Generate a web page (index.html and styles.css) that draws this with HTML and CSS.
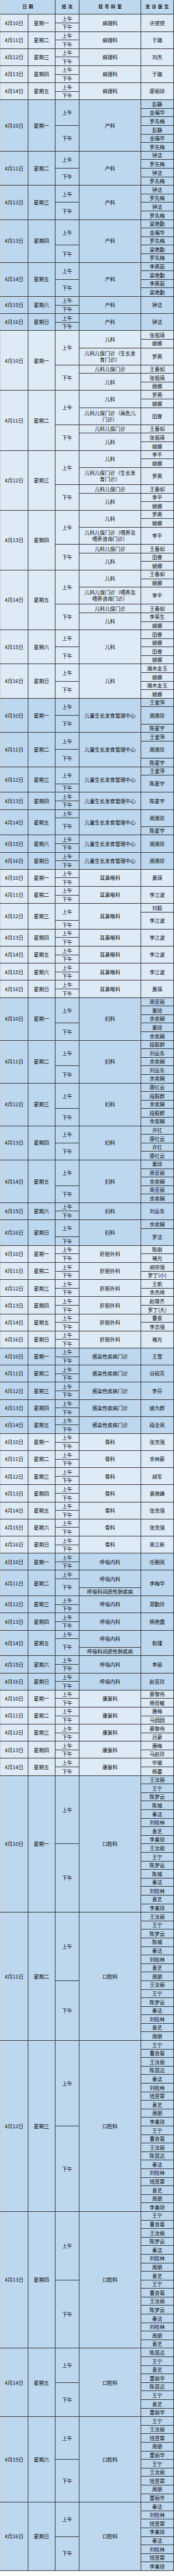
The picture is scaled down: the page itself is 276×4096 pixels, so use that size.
FILE: index.html
```html
<!DOCTYPE html>
<html lang="zh-CN">
<head>
<meta charset="utf-8">
<title>门诊排班表</title>
<link rel="stylesheet" href="styles.css">
</head>
<body>
<table class="sched">
<colgroup><col class="c-date"><col class="c-wk"><col class="c-shift"><col class="c-dept"><col class="c-doc"></colgroup>
<thead>
<tr><th colspan="2">日期</th><th>班次</th><th>挂号科室</th><th>坐诊医生</th></tr>
</thead>

<tbody class="lt">
<tr><td rowspan="2">4月10日</td><td rowspan="2">星期一</td><td>上午</td><td rowspan="2">病理科</td><td rowspan="2">许赟赟</td></tr>
<tr><td>下午</td></tr>
<tr><td rowspan="2">4月11日</td><td rowspan="2">星期二</td><td>上午</td><td rowspan="2">病理科</td><td rowspan="2">于璐</td></tr>
<tr><td>下午</td></tr>
<tr><td rowspan="2">4月12日</td><td rowspan="2">星期三</td><td>上午</td><td rowspan="2">病理科</td><td rowspan="2">刘杰</td></tr>
<tr><td>下午</td></tr>
<tr><td rowspan="2">4月13日</td><td rowspan="2">星期四</td><td>上午</td><td rowspan="2">病理科</td><td rowspan="2">于璐</td></tr>
<tr><td>下午</td></tr>
<tr><td rowspan="2">4月14日</td><td rowspan="2">星期五</td><td>上午</td><td rowspan="2">病理科</td><td rowspan="2">廖丽琼</td></tr>
<tr><td>下午</td></tr>
</tbody>

<tbody class="dk">
<tr><td rowspan="6">4月10日</td><td rowspan="6">星期一</td><td rowspan="3">上午</td><td rowspan="6">产科</td><td>彭静</td></tr>
<tr><td>金福华</td></tr>
<tr><td>罗先梅</td></tr>
<tr><td rowspan="3">下午</td><td>彭静</td></tr>
<tr><td>金福华</td></tr>
<tr><td>罗先梅</td></tr>
<tr><td rowspan="4">4月11日</td><td rowspan="4">星期二</td><td rowspan="2">上午</td><td rowspan="4">产科</td><td>钟洁</td></tr>
<tr><td>罗先梅</td></tr>
<tr><td rowspan="2">下午</td><td>钟洁</td></tr>
<tr><td>罗先梅</td></tr>
<tr><td rowspan="4">4月12日</td><td rowspan="4">星期三</td><td rowspan="2">上午</td><td rowspan="4">产科</td><td>钟洁</td></tr>
<tr><td>罗先梅</td></tr>
<tr><td rowspan="2">下午</td><td>钟洁</td></tr>
<tr><td>罗先梅</td></tr>
<tr><td rowspan="5">4月13日</td><td rowspan="5">星期四</td><td rowspan="3">上午</td><td rowspan="5">产科</td><td>梁艳勤</td></tr>
<tr><td>金福华</td></tr>
<tr><td>罗先梅</td></tr>
<tr><td rowspan="2">下午</td><td>梁艳勤</td></tr>
<tr><td>罗先梅</td></tr>
<tr><td rowspan="4">4月14日</td><td rowspan="4">星期五</td><td rowspan="2">上午</td><td rowspan="4">产科</td><td>李燕茹</td></tr>
<tr><td>梁艳勤</td></tr>
<tr><td rowspan="2">下午</td><td>李燕茹</td></tr>
<tr><td>梁艳勤</td></tr>
<tr><td rowspan="2">4月15日</td><td rowspan="2">星期六</td><td>上午</td><td rowspan="2">产科</td><td rowspan="2">钟洁</td></tr>
<tr><td>下午</td></tr>
<tr><td rowspan="2">4月16日</td><td rowspan="2">星期日</td><td>上午</td><td rowspan="2">产科</td><td rowspan="2">钟洁</td></tr>
<tr><td>下午</td></tr>
</tbody>

<tbody class="lt">
<tr><td rowspan="7">4月10日</td><td rowspan="7">星期一</td><td rowspan="4">上午</td><td rowspan="2">儿科</td><td>张祖瑛</td></tr>
<tr><td>姚娜</td></tr>
<tr><td rowspan="2" class="wrap">儿科儿保门诊（生长发育门诊）</td><td rowspan="2">罗燕</td></tr>
<tr></tr>
<tr><td rowspan="3">下午</td><td>儿科儿保门诊</td><td>王春如</td></tr>
<tr><td rowspan="2">儿科</td><td>张祖瑛</td></tr>
<tr><td>姚娜</td></tr>
<tr><td rowspan="7">4月11日</td><td rowspan="7">星期二</td><td rowspan="4">上午</td><td rowspan="2">儿科</td><td>罗燕</td></tr>
<tr><td>姚娜</td></tr>
<tr><td rowspan="2" class="wrap">儿科儿保门诊（高危儿门诊）</td><td rowspan="2">田睿</td></tr>
<tr></tr>
<tr><td rowspan="3">下午</td><td>儿科儿保门诊</td><td>王春如</td></tr>
<tr><td rowspan="2">儿科</td><td>张祖瑛</td></tr>
<tr><td>姚娜</td></tr>
<tr><td rowspan="7">4月12日</td><td rowspan="7">星期三</td><td rowspan="4">上午</td><td rowspan="2">儿科</td><td>李平</td></tr>
<tr><td>姚娜</td></tr>
<tr><td rowspan="2" class="wrap">儿科儿保门诊（生长发育门诊）</td><td rowspan="2">罗燕</td></tr>
<tr></tr>
<tr><td rowspan="3">下午</td><td>儿科儿保门诊</td><td>王春如</td></tr>
<tr><td rowspan="2">儿科</td><td>李平</td></tr>
<tr><td>姚娜</td></tr>
<tr><td rowspan="7">4月13日</td><td rowspan="7">星期四</td><td rowspan="4">上午</td><td rowspan="2">儿科</td><td>罗燕</td></tr>
<tr><td>姚娜</td></tr>
<tr><td rowspan="2" class="wrap">儿科儿保门诊（喂养及喂养咨询门诊）</td><td rowspan="2">李平</td></tr>
<tr></tr>
<tr><td rowspan="3">下午</td><td>儿科儿保门诊</td><td>王春如</td></tr>
<tr><td rowspan="2">儿科</td><td>田睿</td></tr>
<tr><td>姚娜</td></tr>
<tr><td rowspan="7">4月14日</td><td rowspan="7">星期五</td><td rowspan="4">上午</td><td rowspan="2">儿科</td><td>王春如</td></tr>
<tr><td>姚娜</td></tr>
<tr><td rowspan="2" class="wrap">儿科儿保门诊（喂养及喂养咨询门诊）</td><td rowspan="2">李平</td></tr>
<tr></tr>
<tr><td rowspan="3">下午</td><td>儿科儿保门诊</td><td>王春如</td></tr>
<tr><td rowspan="2">儿科</td><td>李荣生</td></tr>
<tr><td>姚娜</td></tr>
<tr><td rowspan="4">4月15日</td><td rowspan="4">星期六</td><td rowspan="2">上午</td><td rowspan="4">儿科</td><td>田睿</td></tr>
<tr><td>姚娜</td></tr>
<tr><td rowspan="2">下午</td><td>田睿</td></tr>
<tr><td>姚娜</td></tr>
<tr><td rowspan="4">4月16日</td><td rowspan="4">星期日</td><td rowspan="2">上午</td><td rowspan="4">儿科</td><td>端木金玉</td></tr>
<tr><td>姚娜</td></tr>
<tr><td rowspan="2">下午</td><td>端木金玉</td></tr>
<tr><td>姚娜</td></tr>
</tbody>

<tbody class="dk">
<tr><td rowspan="4">4月10日</td><td rowspan="4">星期一</td><td rowspan="2">上午</td><td rowspan="4">儿童生长发育管理中心</td><td>王爱萍</td></tr>
<tr><td rowspan="2">周焕珍</td></tr>
<tr><td rowspan="2">下午</td></tr>
<tr><td>陈星宇</td></tr>
<tr><td rowspan="4">4月11日</td><td rowspan="4">星期二</td><td rowspan="2">上午</td><td rowspan="4">儿童生长发育管理中心</td><td>王爱萍</td></tr>
<tr><td rowspan="2">周焕珍</td></tr>
<tr><td rowspan="2">下午</td></tr>
<tr><td>陈星宇</td></tr>
<tr><td rowspan="3">4月12日</td><td rowspan="3">星期三</td><td rowspan="2">上午</td><td rowspan="3">儿童生长发育管理中心</td><td>王爱萍</td></tr>
<tr><td rowspan="2">陈星宇</td></tr>
<tr><td>下午</td></tr>
<tr><td rowspan="2">4月13日</td><td rowspan="2">星期四</td><td>上午</td><td rowspan="2">儿童生长发育管理中心</td><td rowspan="2">陈星宇</td></tr>
<tr><td>下午</td></tr>
<tr><td rowspan="3">4月14日</td><td rowspan="3">星期五</td><td>上午</td><td rowspan="3">儿童生长发育管理中心</td><td rowspan="2">周焕珍</td></tr>
<tr><td rowspan="2">下午</td></tr>
<tr><td>陈星宇</td></tr>
<tr><td rowspan="2">4月15日</td><td rowspan="2">星期六</td><td>上午</td><td rowspan="2">儿童生长发育管理中心</td><td rowspan="2">周焕珍</td></tr>
<tr><td>下午</td></tr>
<tr><td rowspan="2">4月16日</td><td rowspan="2">星期日</td><td>上午</td><td rowspan="2">儿童生长发育管理中心</td><td rowspan="2">周焕珍</td></tr>
<tr><td>下午</td></tr>
</tbody>

<tbody class="lt">
<tr><td rowspan="2">4月10日</td><td rowspan="2">星期一</td><td>上午</td><td rowspan="2">耳鼻喉科</td><td rowspan="2">黄瑛</td></tr>
<tr><td>下午</td></tr>
<tr><td rowspan="2">4月11日</td><td rowspan="2">星期二</td><td>上午</td><td rowspan="2">耳鼻喉科</td><td rowspan="2">李江波</td></tr>
<tr><td>下午</td></tr>
<tr><td rowspan="3">4月12日</td><td rowspan="3">星期三</td><td rowspan="2">上午</td><td rowspan="3">耳鼻喉科</td><td>刘毅</td></tr>
<tr><td rowspan="2">李江波</td></tr>
<tr><td>下午</td></tr>
<tr><td rowspan="2">4月13日</td><td rowspan="2">星期四</td><td>上午</td><td rowspan="2">耳鼻喉科</td><td rowspan="2">李江波</td></tr>
<tr><td>下午</td></tr>
<tr><td rowspan="2">4月14日</td><td rowspan="2">星期五</td><td>上午</td><td rowspan="2">耳鼻喉科</td><td rowspan="2">李江波</td></tr>
<tr><td>下午</td></tr>
<tr><td rowspan="2">4月15日</td><td rowspan="2">星期六</td><td>上午</td><td rowspan="2">耳鼻喉科</td><td rowspan="2">李江波</td></tr>
<tr><td>下午</td></tr>
<tr><td rowspan="2">4月16日</td><td rowspan="2">星期日</td><td>上午</td><td rowspan="2">耳鼻喉科</td><td rowspan="2">黄瑛</td></tr>
<tr><td>下午</td></tr>
</tbody>

<tbody class="dk">
<tr><td rowspan="5">4月10日</td><td rowspan="5">星期一</td><td rowspan="3">上午</td><td rowspan="5">妇科</td><td>周亚丽</td></tr>
<tr><td>栗琼</td></tr>
<tr><td>余奕娴</td></tr>
<tr><td rowspan="2">下午</td><td>栗琼</td></tr>
<tr><td>余奕娴</td></tr>
<tr><td rowspan="5">4月11日</td><td rowspan="5">星期二</td><td rowspan="3">上午</td><td rowspan="5">妇科</td><td>段毅群</td></tr>
<tr><td>刘云东</td></tr>
<tr><td>余奕娴</td></tr>
<tr><td rowspan="2">下午</td><td>刘云东</td></tr>
<tr><td>余奕娴</td></tr>
<tr><td rowspan="5">4月12日</td><td rowspan="5">星期三</td><td rowspan="3">上午</td><td rowspan="5">妇科</td><td>廖红云</td></tr>
<tr><td>段毅群</td></tr>
<tr><td>余奕娴</td></tr>
<tr><td rowspan="2">下午</td><td>段毅群</td></tr>
<tr><td>余奕娴</td></tr>
<tr><td rowspan="4">4月13日</td><td rowspan="4">星期四</td><td rowspan="2">上午</td><td rowspan="4">妇科</td><td>许红</td></tr>
<tr><td>廖红云</td></tr>
<tr><td rowspan="2">下午</td><td>许红</td></tr>
<tr><td>廖红云</td></tr>
<tr><td rowspan="5">4月14日</td><td rowspan="5">星期五</td><td rowspan="3">上午</td><td rowspan="5">妇科</td><td>栗琼</td></tr>
<tr><td>周亚丽</td></tr>
<tr><td>余奕娴</td></tr>
<tr><td rowspan="2">下午</td><td>周亚丽</td></tr>
<tr><td>余奕娴</td></tr>
<tr><td rowspan="2">4月15日</td><td rowspan="2">星期六</td><td>上午</td><td rowspan="2">妇科</td><td rowspan="2">刘云东</td></tr>
<tr><td>下午</td></tr>
<tr><td rowspan="3">4月16日</td><td rowspan="3">星期日</td><td rowspan="2">上午</td><td rowspan="3">妇科</td><td>余奕娴</td></tr>
<tr><td rowspan="2">罗洁</td></tr>
<tr><td>下午</td></tr>
</tbody>

<tbody class="lt">
<tr><td rowspan="2">4月10日</td><td rowspan="2">星期一</td><td>上午</td><td rowspan="2">肝胆外科</td><td>陈刚</td></tr>
<tr><td>下午</td><td>褚光</td></tr>
<tr><td rowspan="2">4月11日</td><td rowspan="2">星期二</td><td>上午</td><td rowspan="2">肝胆外科</td><td>胡宗强</td></tr>
<tr><td>下午</td><td>罗丁(小)</td></tr>
<tr><td rowspan="2">4月12日</td><td rowspan="2">星期三</td><td>上午</td><td rowspan="2">肝胆外科</td><td>王帆</td></tr>
<tr><td>下午</td><td>余杰琦</td></tr>
<tr><td rowspan="2">4月13日</td><td rowspan="2">星期四</td><td>上午</td><td rowspan="2">肝胆外科</td><td>赵雄齐</td></tr>
<tr><td>下午</td><td>罗丁(大)</td></tr>
<tr><td rowspan="2">4月14日</td><td rowspan="2">星期五</td><td>上午</td><td rowspan="2">肝胆外科</td><td>曹俊</td></tr>
<tr><td>下午</td><td>李志强</td></tr>
<tr><td rowspan="2">4月16日</td><td rowspan="2">星期日</td><td>上午</td><td rowspan="2">肝胆外科</td><td rowspan="2">褚光</td></tr>
<tr><td>下午</td></tr>
</tbody>

<tbody class="dk">
<tr><td rowspan="2">4月10日</td><td rowspan="2">星期一</td><td>上午</td><td rowspan="2">感染性疾病门诊</td><td rowspan="2">王雪</td></tr>
<tr><td>下午</td></tr>
<tr><td rowspan="2">4月11日</td><td rowspan="2">星期二</td><td>上午</td><td rowspan="2">感染性疾病门诊</td><td rowspan="2">谷砚芳</td></tr>
<tr><td>下午</td></tr>
<tr><td rowspan="2">4月12日</td><td rowspan="2">星期三</td><td>上午</td><td rowspan="2">感染性疾病门诊</td><td rowspan="2">李芬</td></tr>
<tr><td>下午</td></tr>
<tr><td rowspan="2">4月13日</td><td rowspan="2">星期四</td><td>上午</td><td rowspan="2">感染性疾病门诊</td><td rowspan="2">姚为群</td></tr>
<tr><td>下午</td></tr>
<tr><td rowspan="2">4月14日</td><td rowspan="2">星期五</td><td>上午</td><td rowspan="2">感染性疾病门诊</td><td rowspan="2">段全凤</td></tr>
<tr><td>下午</td></tr>
</tbody>

<tbody class="lt">
<tr><td rowspan="2">4月10日</td><td rowspan="2">星期一</td><td>上午</td><td rowspan="2">骨科</td><td rowspan="2">张克强</td></tr>
<tr><td>下午</td></tr>
<tr><td rowspan="2">4月11日</td><td rowspan="2">星期二</td><td>上午</td><td rowspan="2">骨科</td><td rowspan="2">余林薪</td></tr>
<tr><td>下午</td></tr>
<tr><td rowspan="2">4月12日</td><td rowspan="2">星期三</td><td>上午</td><td rowspan="2">骨科</td><td rowspan="2">胡军</td></tr>
<tr><td>下午</td></tr>
<tr><td rowspan="2">4月13日</td><td rowspan="2">星期四</td><td>上午</td><td rowspan="2">骨科</td><td rowspan="2">袁晓峰</td></tr>
<tr><td>下午</td></tr>
<tr><td rowspan="2">4月14日</td><td rowspan="2">星期五</td><td>上午</td><td rowspan="2">骨科</td><td rowspan="2">张克强</td></tr>
<tr><td>下午</td></tr>
<tr><td rowspan="2">4月15日</td><td rowspan="2">星期六</td><td>上午</td><td rowspan="2">骨科</td><td rowspan="2">张克强</td></tr>
<tr><td>下午</td></tr>
<tr><td rowspan="2">4月16日</td><td rowspan="2">星期日</td><td>上午</td><td rowspan="2">骨科</td><td rowspan="2">周立新</td></tr>
<tr><td>下午</td></tr>
</tbody>

<tbody class="dk">
<tr><td rowspan="2">4月10日</td><td rowspan="2">星期一</td><td>上午</td><td rowspan="2">呼吸内科</td><td rowspan="2">任朝凤</td></tr>
<tr><td>下午</td></tr>
<tr><td rowspan="3">4月11日</td><td rowspan="3">星期二</td><td>上午</td><td rowspan="2">呼吸内科</td><td rowspan="3">李梅华</td></tr>
<tr><td rowspan="2">下午</td></tr>
<tr><td>呼吸科间质性肺疾病</td></tr>
<tr><td rowspan="2">4月12日</td><td rowspan="2">星期三</td><td>上午</td><td rowspan="2">呼吸内科</td><td rowspan="2">郑勤玲</td></tr>
<tr><td>下午</td></tr>
<tr><td rowspan="2">4月13日</td><td rowspan="2">星期四</td><td>上午</td><td rowspan="2">呼吸内科</td><td rowspan="2">杨艳霞</td></tr>
<tr><td>下午</td></tr>
<tr><td rowspan="3">4月14日</td><td rowspan="3">星期五</td><td>上午</td><td rowspan="2">呼吸内科</td><td rowspan="3">和瑾</td></tr>
<tr><td rowspan="2">下午</td></tr>
<tr><td>呼吸科间质性肺疾病</td></tr>
<tr><td rowspan="2">4月15日</td><td rowspan="2">星期六</td><td>上午</td><td rowspan="2">呼吸内科</td><td rowspan="2">李丽</td></tr>
<tr><td>下午</td></tr>
<tr><td rowspan="2">4月16日</td><td rowspan="2">星期日</td><td>上午</td><td rowspan="2">呼吸内科</td><td rowspan="2">赵亚玲</td></tr>
<tr><td>下午</td></tr>
</tbody>

<tbody class="lt">
<tr><td rowspan="2">4月10日</td><td rowspan="2">星期一</td><td>上午</td><td rowspan="2">康复科</td><td>蔡黎伟</td></tr>
<tr><td>下午</td><td>杨哲敏</td></tr>
<tr><td rowspan="2">4月11日</td><td rowspan="2">星期二</td><td>上午</td><td rowspan="2">康复科</td><td>唐梅</td></tr>
<tr><td>下午</td><td>马园园</td></tr>
<tr><td rowspan="2">4月12日</td><td rowspan="2">星期三</td><td>上午</td><td rowspan="2">康复科</td><td>蔡黎伟</td></tr>
<tr><td>下午</td><td>吕豪</td></tr>
<tr><td rowspan="2">4月13日</td><td rowspan="2">星期四</td><td>上午</td><td rowspan="2">康复科</td><td>唐梅</td></tr>
<tr><td>下午</td><td>马赵玲</td></tr>
<tr><td rowspan="2">4月14日</td><td rowspan="2">星期五</td><td>上午</td><td rowspan="2">康复科</td><td>毕瑜</td></tr>
<tr><td>下午</td><td>杨蕾</td></tr>
</tbody>

<tbody class="dk">
<tr><td rowspan="16">4月10日</td><td rowspan="16">星期一</td><td rowspan="8">上午</td><td rowspan="16">口腔科</td><td>王汝丽</td></tr>
<tr><td>王宁</td></tr>
<tr><td>陈梦云</td></tr>
<tr><td>陈城</td></tr>
<tr><td>秦洁</td></tr>
<tr><td>刘桂林</td></tr>
<tr><td>袁艺</td></tr>
<tr><td>李美琼</td></tr>
<tr><td rowspan="8">下午</td><td>王汝丽</td></tr>
<tr><td>王宁</td></tr>
<tr><td>陈梦云</td></tr>
<tr><td>陈城</td></tr>
<tr><td>秦洁</td></tr>
<tr><td>刘桂林</td></tr>
<tr><td>袁艺</td></tr>
<tr><td>李美琼</td></tr>

<tr><td rowspan="15">4月11日</td><td rowspan="15">星期二</td><td rowspan="8">上午</td><td rowspan="15">口腔科</td><td>王汝丽</td></tr>
<tr><td>王宁</td></tr>
<tr><td>陈梦云</td></tr>
<tr><td>陈城</td></tr>
<tr><td>秦洁</td></tr>
<tr><td>刘桂林</td></tr>
<tr><td>袁艺</td></tr>
<tr><td>周朋</td></tr>
<tr><td rowspan="7">下午</td><td>王汝丽</td></tr>
<tr><td>王宁</td></tr>
<tr><td>陈梦云</td></tr>
<tr><td>秦洁</td></tr>
<tr><td>刘桂林</td></tr>
<tr><td>袁艺</td></tr>
<tr><td>周朋</td></tr>

<tr><td rowspan="20">4月12日</td><td rowspan="20">星期三</td><td rowspan="10">上午</td><td rowspan="20">口腔科</td><td>王宁</td></tr>
<tr><td>曹良菊</td></tr>
<tr><td>王汝丽</td></tr>
<tr><td>陈昆达</td></tr>
<tr><td>秦洁</td></tr>
<tr><td>刘桂林</td></tr>
<tr><td>钱昱霏</td></tr>
<tr><td>袁艺</td></tr>
<tr><td>周朋</td></tr>
<tr><td>李美琼</td></tr>
<tr><td rowspan="10">下午</td><td>王宁</td></tr>
<tr><td>曹良菊</td></tr>
<tr><td>王汝丽</td></tr>
<tr><td>陈昆达</td></tr>
<tr><td>秦洁</td></tr>
<tr><td>刘桂林</td></tr>
<tr><td>钱昱霏</td></tr>
<tr><td>袁艺</td></tr>
<tr><td>周朋</td></tr>
<tr><td>李美琼</td></tr>

<tr><td rowspan="16">4月13日</td><td rowspan="16">星期四</td><td rowspan="8">上午</td><td rowspan="16">口腔科</td><td>王宁</td></tr>
<tr><td>曹良菊</td></tr>
<tr><td>王汝丽</td></tr>
<tr><td>陈梦云</td></tr>
<tr><td>秦洁</td></tr>
<tr><td>刘桂林</td></tr>
<tr><td>周朋</td></tr>
<tr><td>袁艺</td></tr>
<tr><td rowspan="8">下午</td><td>王宁</td></tr>
<tr><td>曹良菊</td></tr>
<tr><td>王汝丽</td></tr>
<tr><td>陈梦云</td></tr>
<tr><td>秦洁</td></tr>
<tr><td>刘桂林</td></tr>
<tr><td>周朋</td></tr>
<tr><td>袁艺</td></tr>

<tr><td rowspan="8">4月14日</td><td rowspan="8">星期五</td><td rowspan="4">上午</td><td rowspan="8">口腔科</td><td>陈昆达</td></tr>
<tr><td>王宁</td></tr>
<tr><td>袁艺</td></tr>
<tr><td>董丽华</td></tr>
<tr><td rowspan="4">下午</td><td>陈昆达</td></tr>
<tr><td>王宁</td></tr>
<tr><td>袁艺</td></tr>
<tr><td>董丽华</td></tr>

<tr><td rowspan="10">4月15日</td><td rowspan="10">星期六</td><td rowspan="5">上午</td><td rowspan="10">口腔科</td><td>王宁</td></tr>
<tr><td>王汝丽</td></tr>
<tr><td>钱昱霏</td></tr>
<tr><td>周朋</td></tr>
<tr><td>董丽华</td></tr>
<tr><td rowspan="5">下午</td><td>王宁</td></tr>
<tr><td>王汝丽</td></tr>
<tr><td>钱昱霏</td></tr>
<tr><td>周朋</td></tr>
<tr><td>董丽华</td></tr>

<tr><td rowspan="8">4月16日</td><td rowspan="8">星期日</td><td rowspan="4">上午</td><td rowspan="8">口腔科</td><td>秦洁</td></tr>
<tr><td>刘桂林</td></tr>
<tr><td>钱昱霏</td></tr>
<tr><td>李美琼</td></tr>
<tr><td rowspan="4">下午</td><td>秦洁</td></tr>
<tr><td>刘桂林</td></tr>
<tr><td>钱昱霏</td></tr>
<tr><td>李美琼</td></tr>
</tbody>
</table>
</body>
</html>
```

FILE: styles.css
```css
html, body {
  margin: 0;
  padding: 0;
  background: #ffffff;
}

body {
  font-family: "Noto Sans CJK SC", "Noto Sans", sans-serif;
  color: #000000;
}

.sched {
  border-collapse: collapse;
  table-layout: fixed;
  width: 274.7px;
  border-left: 1px solid #d0d0d0;
}

.sched col.c-date,
.sched col.c-wk { width: 43.5px; }
.sched col.c-shift { width: 38.1px; }
.sched col.c-dept { width: 97.9px; }
.sched col.c-doc { width: 51.7px; }

.sched th,
.sched td {
  padding: 0;
  border-right: 1px solid #3c3c3c;
  border-bottom: 1px solid #3c3c3c;
  text-align: center;
  vertical-align: middle;
  white-space: nowrap;
  font-size: 8.1px;
  line-height: 9.6px;
  font-weight: 400;
}

.sched thead tr { height: 22.85px; }
.sched tbody tr { height: 13.6px; }

.sched thead th {
  background: #bdd7ee;
  font-weight: 700;
  font-size: 7px;
  letter-spacing: 3px;
  padding-left: 3px;
  color: #111111;
}

.sched .lt td { background: #ddebf7; }
.sched .dk td { background: #bdd7ee; }

.sched td.wrap {
  white-space: normal;
  padding: 0 4px;
  line-height: 9.8px;
}
```
